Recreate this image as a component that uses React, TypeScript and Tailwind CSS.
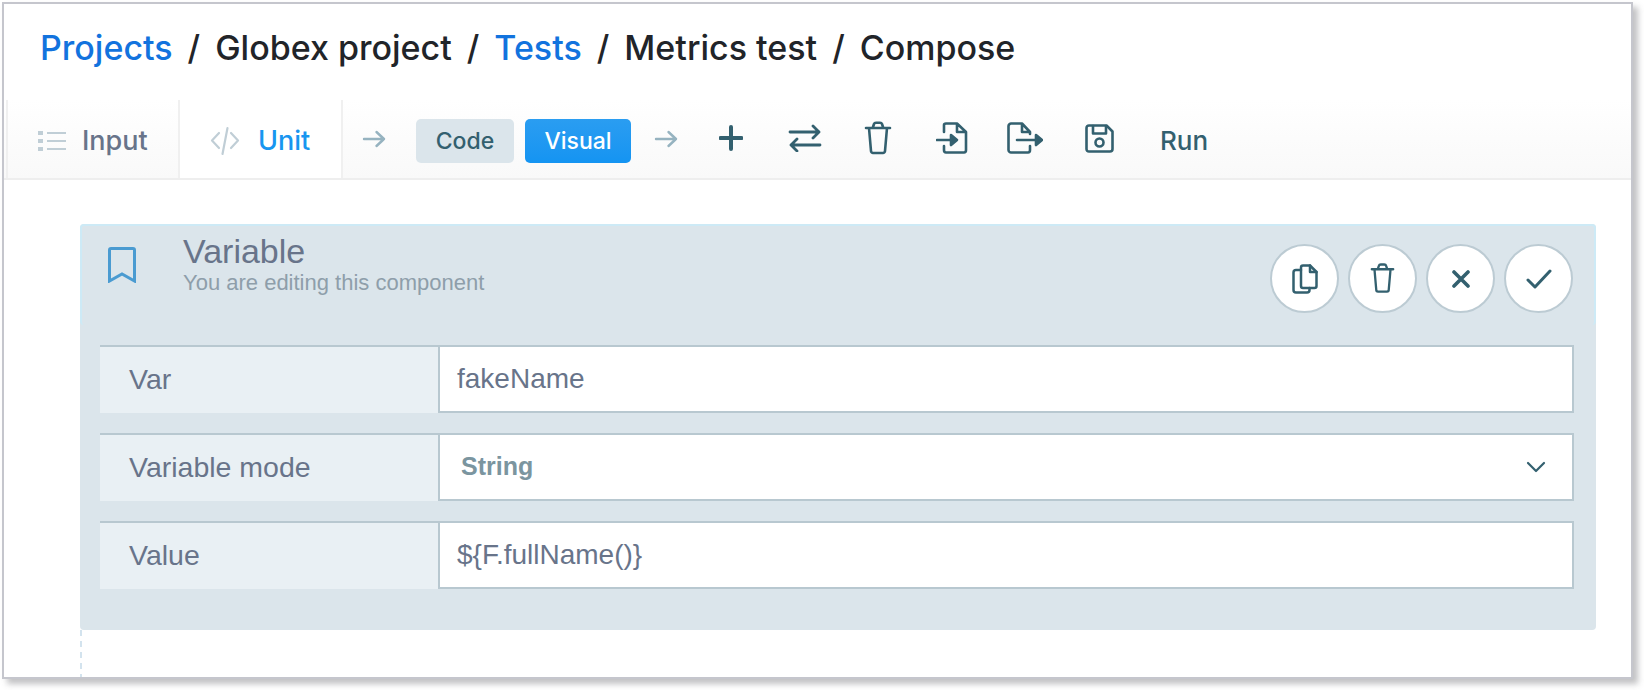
import React from "react";

const Ic = ({ w = 32, h = 32, sw = 2.4, c = "#33606f", children }: { w?: number; h?: number; sw?: number; c?: string; children: React.ReactNode }) => (
  <svg width={w} height={h} viewBox={`0 0 ${w} ${h}`} fill="none" stroke={c} strokeWidth={sw} strokeLinecap="round" strokeLinejoin="round" className="shrink-0">
    {children}
  </svg>
);

const Arrow = () => (
  <Ic w={24} h={20} sw={2.4} c="#96b3c0">
    <path d="M2 10H22M14.5 3L22 10L14.5 17" />
  </Ic>
);

const Trash = ({ s = 28 }: { s?: number }) => (
  <svg width={s} height={s * 34 / 28} viewBox="0 0 28 34" fill="none" stroke="#33606f" strokeWidth="2.6" strokeLinecap="round" strokeLinejoin="round" className="shrink-0">
    <path d="M2 7H26M5 7L7 30C7 31 8 32 9 32H19C20 32 21 31 21 30L23 7M9 6L10 3C10.3 2 11 1.7 12 1.7H16C17 1.7 17.7 2 18 3L19 6" />
  </svg>
);

const Row = ({ label, children }: { label: string; children: React.ReactNode }) => (
  <div className="flex h-[68px] border-t-2 border-[#b8c8d0]">
    <div className="flex w-[338px] items-center bg-[#e9f0f4] pl-[29px] pb-[2px] text-[28.5px] text-[#68748a]">{label}</div>
    <div className="flex flex-1 items-center border-2 border-t-0 border-[#b8c8d0] bg-white text-[28px] text-[#68748a]">{children}</div>
  </div>
);

const Round = ({ children }: { children: React.ReactNode }) => (
  <div className="flex h-[69px] w-[69px] items-center justify-center rounded-full border-2 border-[#bccbd3] bg-white">{children}</div>
);

export default function App() {
  return (
    <div className="h-[690px] w-[1644px] overflow-hidden bg-white pl-[2px] pt-[2px] font-['Liberation_Sans',sans-serif]">
      <div className="h-[677px] w-[1631px] overflow-hidden border-2 border-[#c5c6cd] bg-white shadow-[5px_5px_6px_rgba(120,120,125,0.45)]">
        <div className="flex h-[96px] items-center gap-[15px] pb-[9px] pl-[36px] font-['Inter',sans-serif] text-[34px] font-medium leading-none text-[#212429]">
          <span className="text-[#1273de]">Projects</span>
          <span>/</span>
          <span>Globex project</span>
          <span>/</span>
          <span className="text-[#1273de]">Tests</span>
          <span>/</span>
          <span>Metrics test</span>
          <span>/</span>
          <span>Compose</span>
        </div>

        <div className="flex h-[80px] items-stretch border-b-2 border-[#eeeeee] bg-gradient-to-b from-white to-[#f9f9f9] pl-[2px] font-['Inter',sans-serif]">
          <div className="flex w-[174px] items-center gap-[16px] border-x-2 border-[#f0f0f0] pl-[30px] pt-[3px]">
            <svg width="28" height="22" viewBox="0 0 28 22" className="shrink-0">
              <g fill="#c0ced6">
                <rect x="0" y="1" width="5" height="4" />
                <rect x="0" y="9" width="5" height="4" />
                <rect x="0" y="17" width="5" height="4" />
                <rect x="9" y="2" width="19" height="2" />
                <rect x="9" y="10" width="19" height="2" />
                <rect x="9" y="18" width="19" height="2" />
              </g>
            </svg>
            <span className="mt-[1px] text-[27px] font-medium text-[#68748a]">Input</span>
          </div>
          <div className="flex w-[163px] items-center gap-[18px] border-r-2 border-[#f0f0f0] bg-white pl-[30px] pt-[3px]">
            <Ic w={30} h={30} sw={2.2} c="#c0ced6">
              <path d="M9 7L2 14.5L9 22M21 7L28 14.5L21 22M17.5 2L12.5 28" />
            </Ic>
            <span className="mt-[1px] text-[27px] font-medium text-[#1896f0]">Unit</span>
          </div>
          <div className="flex items-center pl-[19px] pt-[3px]">
            <div className="mb-[3px]"><Arrow /></div>
            <button className="ml-[30px] h-[44px] w-[98px] rounded-[5px] bg-[#dbe5eb] pt-[2px] text-[23px] font-medium text-[#33606f]">Code</button>
            <button className="ml-[11px] h-[44px] w-[106px] rounded-[5px] bg-gradient-to-b from-[#2a9df1] to-[#1494f2] pt-[2px] text-[23px] font-medium text-white">Visual</button>
            <div className="mb-[4px] ml-[23px]"><Arrow /></div>
            <div className="mb-[5px] ml-[41px]">
              <Ic w={24} h={26} sw={4}>
                <path d="M12 2V24M1.5 13H22.5" />
              </Ic>
            </div>
            <div className="mb-[5px] ml-[45px]">
              <Ic w={34} h={28} sw={2.8}>
                <path d="M2 8H31M25 2L31 8L25 14M32 21H3M9 15L3 21L9 27" />
              </Ic>
            </div>
            <div className="mb-[5px] ml-[42px]"><Trash /></div>
            <div className="mb-[5px] ml-[44px]">
              <Ic w={32} h={32} sw={2.6}>
                <path d="M8 10V3C8 2 9 1.5 10 1.5H21L30 10V28C30 29.5 29 30.5 28 30.5H10C9 30.5 8 29.5 8 28V24M21 1.5V10H30M1 18H15" />
                <path d="M15 13L21 18L15 23Z" fill="#33606f" />
              </Ic>
            </div>
            <div className="mb-[5px] ml-[39px]">
              <Ic w={36} h={32} sw={2.6}>
                <path d="M23 12V10L15 1.5H4C3 1.5 1.5 2.5 1.5 4V28C1.5 29.5 3 30.5 4 30.5H21C22 30.5 23 29.5 23 28V24M15 1.5V10H23M10 18H30" />
                <path d="M29 13L35 18L29 23Z" fill="#33606f" />
              </Ic>
            </div>
            <div className="mb-[5px] ml-[42px]">
              <Ic w={29} h={29} sw={2.6}>
                <path d="M4 1.5H21.5L27.5 7.5V25C27.5 26.5 26.5 27.5 25 27.5H4C2.5 27.5 1.5 26.5 1.5 25V4C1.5 2.5 2.5 1.5 4 1.5Z" />
                <path d="M8 2V9.5H21V2" />
                <circle cx="14.5" cy="18.5" r="4" />
              </Ic>
            </div>
            <span className="ml-[46px] text-[26px] font-medium text-[#33606f]">Run</span>
          </div>
        </div>

        <div className="pt-[44px]">
          <div className="ml-[76px] h-[406px] w-[1516px] rounded-[4px] bg-[#dbe5eb]">
            <div className="flex h-[101px] rounded-[4px] border-2 border-b-0 border-[#cdeaf6] pl-[26px] pr-[21px]">
              <div className="pt-[21px]">
                <svg width="28" height="36" viewBox="0 0 28 36" fill="none" stroke="#4a9bd1" strokeWidth="3" className="shrink-0">
                  <path d="M1.5 34V3C1.5 2 2 1.5 3 1.5H25C26 1.5 26.5 2 26.5 3V34L14 27Z" />
                </svg>
              </div>
              <div className="ml-[47px] pt-[8px]">
                <div className="text-[34px] leading-[35px] text-[#68748a]">Variable</div>
                <div className="mt-[3px] text-[22px] leading-[22px] text-[#8e9eaa]">You are editing this component</div>
              </div>
              <div className="ml-auto flex gap-[9px] pt-[18px]">
                <Round>
                  <Ic w={26} h={30} sw={2.5}>
                    <path d="M9 3.5C9 2.3 10 1.5 11 1.5H18L24.5 8V22C24.5 23.2 23.5 24 22.5 24H11C10 24 9 23.2 9 22Z" />
                    <path d="M18 1.5V8H24.5" />
                    <path d="M9 6H4C2.5 6 1.5 7 1.5 8.5V26C1.5 27.5 2.5 28.5 4 28.5H15C16.5 28.5 17.5 27.5 17.5 26V24" />
                  </Ic>
                </Round>
                <Round><Trash s={25} /></Round>
                <Round>
                  <Ic w={18} h={18} sw={3.6}>
                    <path d="M2 2L16 16M16 2L2 16" />
                  </Ic>
                </Round>
                <Round>
                  <Ic w={26} h={20} sw={3}>
                    <path d="M2 11L9 18L24 2" />
                  </Ic>
                </Round>
              </div>
            </div>
            <div className="flex flex-col gap-[20px] pl-[20px] pr-[22px] pt-[20px]">
              <Row label="Var"><span className="pl-[17px]">fakeName</span></Row>
              <Row label="Variable mode">
                <div className="flex w-full items-center justify-between pl-[21px] pr-[26px]">
                  <span className="text-[25px] font-bold text-[#7b959f]">String</span>
                  <svg width="20" height="12" viewBox="0 0 20 12" fill="none" stroke="#33606f" strokeWidth="2.2" strokeLinecap="round" strokeLinejoin="round" className="shrink-0">
                    <path d="M2 2L10 10L18 2" />
                  </svg>
                </div>
              </Row>
              <Row label="Value"><span className="pl-[17px]">{"${F.fullName()}"}</span></Row>
            </div>
          </div>
          <div className="ml-[76px] h-[50px] border-l-2 border-dashed border-[#d3e3ee]" />
        </div>
      </div>
    </div>
  );
}
